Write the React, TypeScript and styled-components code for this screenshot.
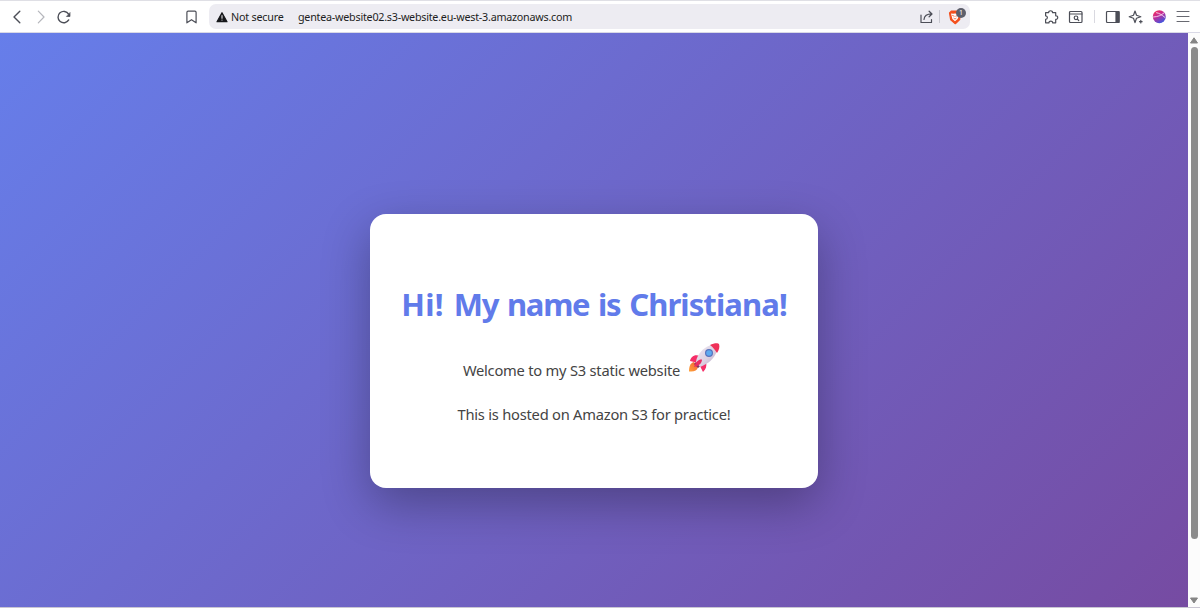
import React from "react";
import styled, { createGlobalStyle } from "styled-components";

const GlobalStyle = createGlobalStyle`
  * { box-sizing: border-box; }
  body { margin: 0; overflow: hidden; font-family: "Noto Sans", "Open Sans", sans-serif; background: #fff; }
`;

const Browser = styled.div`
  display: flex;
  flex-direction: column;
  width: 1200px;
  height: 608px;
`;

const Toolbar = styled.header`
  display: flex;
  align-items: center;
  height: 33px;
  flex: none;
  border-top: 1px solid #dfdfe5;
  border-bottom: 1px solid #d9d9e6;
  background: #fff;
  color: #4c4e57;
`;

const IconSlot = styled.span<{ $w?: number; $ml?: number }>`
  display: flex;
  flex: none;
  width: ${(p) => p.$w ?? 16}px;
  height: 16px;
  margin-left: ${(p) => p.$ml ?? 0}px;
  svg { display: block; overflow: visible; }
`;

const AddressBar = styled.div`
  display: flex;
  align-items: center;
  width: 761px;
  height: 25px;
  margin-left: 10px;
  padding-left: 7px;
  border-radius: 7px;
  background: #edecf2;
`;

const AddressText = styled.span<{ $w: number; $ml: number; $ls: number }>`
  flex: none;
  width: ${(p) => p.$w}px;
  margin-left: ${(p) => p.$ml}px;
  font-size: 10.75px;
  line-height: 16px;
  letter-spacing: ${(p) => p.$ls}px;
  white-space: nowrap;
  color: #1d1e22;
`;

const Separator = styled.i<{ $ml: number; $light?: boolean }>`
  flex: none;
  width: 1px;
  height: 13px;
  margin-left: ${(p) => p.$ml}px;
  background: ${(p) => (p.$light ? "#d9d9e0" : "#c9c9d1")};
`;

const ShieldSlot = styled(IconSlot)`
  position: relative;
`;

const Badge = styled.b`
  position: absolute;
  left: 8px;
  top: -1px;
  width: 10px;
  height: 10px;
  border-radius: 5px;
  background: #5d5f6b;
  color: #fff;
  font-size: 7px;
  font-weight: 400;
  line-height: 10px;
  text-align: center;
`;

const Viewport = styled.div`
  display: flex;
  flex: 1;
  min-height: 0;
  border-bottom: 1px solid #c9c6d2;
`;

const Page = styled.main`
  display: flex;
  flex: 1;
  justify-content: center;
  align-items: flex-start;
  padding-top: 181px;
  background: linear-gradient(135deg, #667eea 0%, #764ba2 100%);
`;

const Card = styled.section`
  display: flex;
  flex-direction: column;
  align-items: center;
  width: 448px;
  height: 274.4px;
  padding-top: 68px;
  border-radius: 16px;
  background: #fff;
  box-shadow: 0 16px 48px rgba(0, 0, 0, 0.3);
`;

const Title = styled.h1`
  margin: 0;
  color: #617bea;
  font-size: 31px;
  font-weight: 700;
  line-height: 44px;
  letter-spacing: -0.9px;
  word-spacing: 1.9px;
  white-space: nowrap;
`;

const Words = styled.span<{ $ls: number }>`
  letter-spacing: ${(p) => p.$ls}px;
`;

const Line = styled.p<{ $mt: number; $ls: number }>`
  display: flex;
  align-items: center;
  height: 22px;
  margin: ${(p) => p.$mt}px 0 0;
  color: #444;
  font-size: 14.7px;
  line-height: 22px;
  letter-spacing: ${(p) => p.$ls}px;
  white-space: nowrap;
`;

const RocketSlot = styled.span`
  display: flex;
  margin: -24px 5px 0 8px;
`;

const Scrollbar = styled.aside`
  display: flex;
  flex-direction: column;
  align-items: center;
  width: 12px;
  padding: 4px 0 3px;
  background: #fcfcfc;
`;

const Thumb = styled.div`
  width: 7px;
  height: 492px;
  margin: 3px 0 auto;
  border-radius: 4px;
  background: #8b8b8b;
`;

const stroke = { fill: "none", stroke: "currentColor", strokeWidth: 1.2, strokeLinecap: "round", strokeLinejoin: "round" } as const;

const Icon = ({ children, w = 16 }: { children: React.ReactNode; w?: number }) => (
  <svg width={w} height="16" viewBox={`0 0 ${w} 16`} {...stroke}>{children}</svg>
);

const Rocket = () => (
  <svg width="32" height="32" viewBox="0 0 32 32">
    <defs>
      <linearGradient id="hull" x1="0" y1="0" x2="1" y2="1">
        <stop offset="0" stopColor="#f0e9f3" />
        <stop offset="0.55" stopColor="#dcd1e2" />
        <stop offset="1" stopColor="#b6a5c4" />
      </linearGradient>
      <linearGradient id="flame" x1="1" y1="0" x2="0" y2="1">
        <stop offset="0" stopColor="#f25d35" />
        <stop offset="1" stopColor="#ffa43a" />
      </linearGradient>
    </defs>
    <path d="M6 20C2 21 1 25 1 29.5C6 30 9 29 10 25Z" fill="url(#flame)" />
    <path d="M12 14C6 12 3 15 2 19L10 21ZM18 20C19 24 18 27 15 30L12 24Z" fill="#f52e68" />
    <path d="M6 22L9 19L14 23L10 26Z" fill="#81345f" />
    <path d="M8 20C9 12 15 6 23 3L29 9C26 17 20 22 12 25Z" fill="url(#hull)" />
    <path d="M22 3C26 1 30 1 31 2C32 5 31 8 29 11C27 8 25 5 22 3Z" fill="#ef3159" />
    <path d="M6 25C8 19 11 17 14 17.5C14 21 11 24 6 25Z" fill="#e92c62" />
    <circle cx="21" cy="11" r="4" fill="#5672bd" />
    <circle cx="21" cy="11" r="2.8" fill="#5daaf0" />
  </svg>
);

export default function App() {
  return (
    <Browser>
      <GlobalStyle />
      <Toolbar>
        <IconSlot $ml={9}><Icon><path d="M10.8 2.2L5 8l5.8 5.8" strokeWidth="1.4" /></Icon></IconSlot>
        <IconSlot $ml={8}><Icon><path d="M5.3 2.2L11 8l-5.7 5.8" stroke="#b5b6bc" /></Icon></IconSlot>
        <IconSlot $ml={7}>
          <Icon><path d="M12.7 10.9A5.7 5.7 0 1 1 12.6 5.1" strokeWidth="1.4" /><path d="M14 3.9V7.5H10.8Z" fill="currentColor" strokeWidth="0.7" /></Icon>
        </IconSlot>
        <IconSlot $ml={111}><Icon><path d="M5.1 2.2h6.8q1.2 0 1.2 1.2v10.4L8.5 10.7l-4.6 3.1V3.4q0-1.2 1.2-1.2Z" /></Icon></IconSlot>
        <AddressBar>
          <IconSlot $w={12}><Icon w={12}><path d="M6 3.7L11 12.7H1Z" fill="#17181b" stroke="#17181b" /><path d="M6 6.5v2.7M6 11v.1" stroke="#d5d5da" /></Icon></IconSlot>
          <AddressText $ml={3} $w={55} $ls={-0.2}>Not secure</AddressText>
          <AddressText $ml={12} $w={611} $ls={-0.24}>gentea-website02.s3-website.eu-west-3.amazonaws.com</AddressText>
          <IconSlot $ml={10}>
            <Icon><path d="M2 6v7.5h10.5v-3M5 10.5c.3-3.6 2.8-5.6 7.8-5.6M10.1 2.2L13 5l-2.9 2.8" /></Icon>
          </IconSlot>
          <Separator $ml={4} />
          <ShieldSlot $ml={8} $w={18}>
            <Icon>
              <path d="M3.5 2h7l1.7 2-.5 6.5L7.3 14.7 2.7 10.8 1.5 4Z" fill="#f4501e" stroke="#f4501e" />
              <path d="M3 4.5l2.2.3L7 4.4l1.8.4 2.2-.3-.2 2.5-1.2 3L7 12.3 4.4 10Z" fill="#fff" stroke="none" />
              <path d="M4.6 6.5l1.6.7M9.4 6.5l-1.6.7M5.9 9.3l1.1.8 1.1-.8" stroke="#f4501e" strokeWidth=".8" />
            </Icon>
            <Badge>1</Badge>
          </ShieldSlot>
        </AddressBar>
        <IconSlot $ml={73}>
          <Icon><path d="M2.6 3.6h3.1C5.3 1.1 9.9 1.1 9.5 3.6h3.2v3.2c2.7-.4 2.7 3.9 0 3.5v3.5H9.6c.2-2.2-3.8-2.2-3.6 0H2.6v-3.4c2.4-.2 2.4-3.5 0-3.6Z" /></Icon>
        </IconSlot>
        <IconSlot $ml={8.5}>
          <Icon><rect x="1.5" y="2.5" width="12.5" height="11" rx="1" /><path d="M1.5 5h12.5M9.4 10.2l1.3 1.3" /><circle cx="8" cy="8.8" r="1.8" /></Icon>
        </IconSlot>
        <Separator $ml={10} $light />
        <IconSlot $ml={10.5}>
          <Icon><rect x="1.5" y="2.5" width="12.5" height="11" rx="1" /><path d="M11 2.5h3v11h-3Z" fill="currentColor" /></Icon>
        </IconSlot>
        <IconSlot $ml={7}>
          <Icon><path d="M7 2L8.5 6.2 12.8 7.8 8.5 9.3 7 13.6 5.5 9.3 1.2 7.8 5.5 6.2ZM12.8 11.4v2.6M11.5 12.7h2.6" /></Icon>
        </IconSlot>
        <IconSlot $ml={7}>
          <Icon>
            <defs><linearGradient id="orb" x1="0" y1="0" x2=".6" y2="1"><stop stopColor="#ff3046" /><stop offset=".48" stopColor="#c52b96" /><stop offset="1" stopColor="#4455dd" /></linearGradient></defs>
            <circle cx="8.3" cy="7.7" r="6.5" fill="url(#orb)" stroke="none" />
            <path d="M2.5 8C7 7.7 10 6.5 13 3.9M5.5 3.7c3 .6 5 2 8.3 4.6" stroke="#f6dcef" strokeWidth="0.9" />
          </Icon>
        </IconSlot>
        <IconSlot $ml={8}><Icon><path d="M2 2.5h12M2 7.5h12M2 12.5h12" stroke="#686971" strokeWidth="1.1" /></Icon></IconSlot>
      </Toolbar>
      <Viewport>
        <Page>
          <Card>
            <Title><Words $ls={0.2}>Hi! </Words><Words $ls={-1.25}>My name is </Words>Christiana!</Title>
            <Line $mt={33} $ls={-0.23}>Welcome to my S3 static website<RocketSlot><Rocket /></RocketSlot></Line>
            <Line $mt={22} $ls={-0.23}>This is hosted on Amazon S3 for practice!</Line>
          </Card>
        </Page>
        <Scrollbar>
          <svg width="8" height="7"><path d="M4 .8L7.5 6H.5Z" fill="#858585" stroke="#858585" strokeLinejoin="round" /></svg>
          <Thumb />
          <svg width="8" height="7"><path d="M4 6L.5 1h7Z" fill="#858585" stroke="#858585" strokeLinejoin="round" /></svg>
        </Scrollbar>
      </Viewport>
    </Browser>
  );
}
